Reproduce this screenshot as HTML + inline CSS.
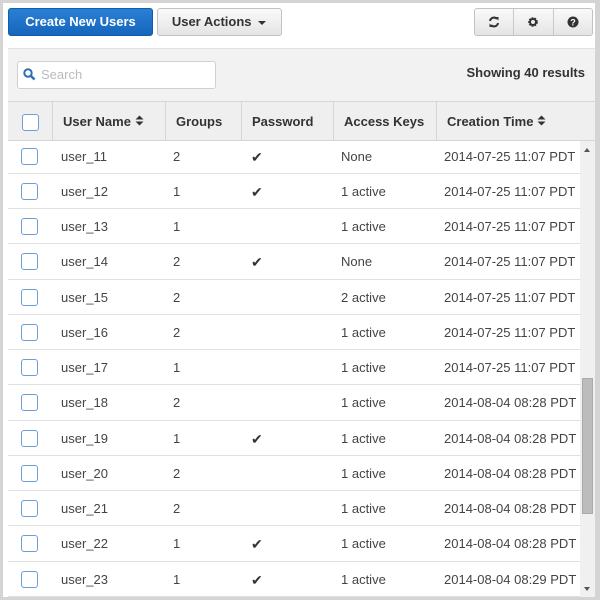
<!DOCTYPE html>
<html><head><style>
*{box-sizing:border-box;margin:0;padding:0}
body{width:600px;height:600px;background:#d4d4d4;font-family:"Liberation Sans",Arial,sans-serif;position:relative;overflow:hidden}
#panel{position:absolute;left:3px;top:3px;width:592px;height:594px;background:#fff;overflow:hidden}
.btn{position:absolute;top:5px;height:28px;border-radius:3px;font-size:13px;font-weight:bold;line-height:26px;text-align:center}
.b1{left:5px;width:145px;background:linear-gradient(#2a7fd4,#1566bd);border:1px solid #135ea8;color:#fff}
.b2{left:154px;width:125px;background:linear-gradient(#fafafa,#e4e4e4);border:1px solid #c2c2c2;color:#333}
.grp{position:absolute;top:5px;left:471px;width:119px;height:28px;border:1px solid #c2c2c2;border-radius:3px;background:linear-gradient(#fafafa,#e4e4e4);display:flex}
.grp div{flex:1;border-left:1px solid #c8c8c8;display:flex;align-items:center;justify-content:center}
.grp div:first-child{border-left:none}
#tool{position:absolute;left:5px;top:45px;width:587px;height:53px;background:#f2f2f2;border-top:1px solid #e2e2e2}
#search{position:absolute;left:9px;top:12px;width:199px;height:28px;background:#fff;border:1px solid #d0d0d0;border-radius:3px;font-size:13px;color:#bbb;line-height:26px;padding-left:23px}
#show{position:absolute;right:10px;top:16px;font-size:13px;font-weight:bold;color:#333}
#head{position:absolute;left:5px;top:98px;width:587px;height:40px;background:#efefef;border-top:1px solid #d6d6d6;border-bottom:1px solid #d6d6d6;font-size:13px;font-weight:bold;color:#333}
.hc{position:absolute;top:0;height:39px;line-height:39px;border-left:1px solid #d6d6d6;padding-left:10px}
.cb{position:absolute;width:17px;height:17px;border:1.5px solid #6d9fd6;border-radius:3px;background:#fff}
#rows{position:absolute;left:5px;top:135.5px;width:572px}
.r{position:relative;height:35.25px;border-bottom:1.5px solid #e0e0e0;font-size:13px;color:#444}
.r span{position:absolute;top:0;line-height:36px}
.r .cb{top:9px}
.ck{font-size:14px;color:#333}
#sb{position:absolute;left:577px;top:138px;width:15px;height:456px;background:#f0f0f0}
#thumb{position:absolute;left:2px;top:237px;width:11px;height:136px;background:#bcbcbc;border:1px solid #aaa}
</style></head><body><div id="panel">
<div class="btn b1">Create New Users</div>
<div class="btn b2">User Actions <svg width="9" height="6" viewBox="0 0 9 6" style="margin-left:3px"><path d="M0 1h8L4 5z" fill="#333"/></svg></div>
<div class="grp">
<div><svg width="12" height="12" viewBox="0 0 12 12"><path d="M2 5a4 4 0 0 1 7-2M10 7a4 4 0 0 1-7 2" stroke="#333" stroke-width="2" fill="none"/><path d="M7 1h3.5v3.5zM5 11H1.5V7.5z" fill="#333"/></svg></div>
<div><svg width="12" height="12" viewBox="0 0 12 12"><circle cx="6" cy="6" r="3.6" fill="none" stroke="#333" stroke-width="2.4" stroke-dasharray="1.6 1"/><circle cx="6" cy="6" r="3" fill="none" stroke="#333" stroke-width="2"/></svg></div>
<div><svg width="12" height="12" viewBox="0 0 12 12"><circle cx="6" cy="6" r="5.5" fill="#333"/><text x="6" y="9.5" font-size="9" font-weight="bold" text-anchor="middle" fill="#fff" font-family="Liberation Sans">?</text></svg></div>
</div>
<div id="tool"><div id="search">Search</div>
<svg style="position:absolute;left:15px;top:19px" width="13" height="13" viewBox="0 0 13 13"><circle cx="5" cy="5" r="3.7" fill="none" stroke="#2f6fb5" stroke-width="2"/><path d="M8 8l3.5 3.5" stroke="#2f6fb5" stroke-width="2.5"/></svg>
<div id="show">Showing 40 results</div></div>
<div id="head">
<div class="cb" style="left:14px;top:12px"></div>
<div class="hc" style="left:44px;width:113px">User Name <svg width="9" height="11" viewBox="0 0 9 11"><path d="M0.5 4.5L4.5 0.5 8.5 4.5zM0.5 6.5L4.5 10.5 8.5 6.5z" fill="#333"/></svg></div>
<div class="hc" style="left:157px;width:76px">Groups</div>
<div class="hc" style="left:233px;width:92px">Password</div>
<div class="hc" style="left:325px;width:103px">Access Keys</div>
<div class="hc" style="left:428px;width:159px">Creation Time <svg width="9" height="11" viewBox="0 0 9 11"><path d="M0.5 4.5L4.5 0.5 8.5 4.5zM0.5 6.5L4.5 10.5 8.5 6.5z" fill="#333"/></svg></div>
</div>
<div id="rows">
<div class="r"><div class="cb" style="left:13px"></div><span style="left:53px">user_11</span><span style="left:165px">2</span><span class="ck" style="left:243px">&#10004;</span><span style="left:333px">None</span><span style="left:436px">2014-07-25 11:07 PDT</span></div>
<div class="r"><div class="cb" style="left:13px"></div><span style="left:53px">user_12</span><span style="left:165px">1</span><span class="ck" style="left:243px">&#10004;</span><span style="left:333px">1 active</span><span style="left:436px">2014-07-25 11:07 PDT</span></div>
<div class="r"><div class="cb" style="left:13px"></div><span style="left:53px">user_13</span><span style="left:165px">1</span><span style="left:333px">1 active</span><span style="left:436px">2014-07-25 11:07 PDT</span></div>
<div class="r"><div class="cb" style="left:13px"></div><span style="left:53px">user_14</span><span style="left:165px">2</span><span class="ck" style="left:243px">&#10004;</span><span style="left:333px">None</span><span style="left:436px">2014-07-25 11:07 PDT</span></div>
<div class="r"><div class="cb" style="left:13px"></div><span style="left:53px">user_15</span><span style="left:165px">2</span><span style="left:333px">2 active</span><span style="left:436px">2014-07-25 11:07 PDT</span></div>
<div class="r"><div class="cb" style="left:13px"></div><span style="left:53px">user_16</span><span style="left:165px">2</span><span style="left:333px">1 active</span><span style="left:436px">2014-07-25 11:07 PDT</span></div>
<div class="r"><div class="cb" style="left:13px"></div><span style="left:53px">user_17</span><span style="left:165px">1</span><span style="left:333px">1 active</span><span style="left:436px">2014-07-25 11:07 PDT</span></div>
<div class="r"><div class="cb" style="left:13px"></div><span style="left:53px">user_18</span><span style="left:165px">2</span><span style="left:333px">1 active</span><span style="left:436px">2014-08-04 08:28 PDT</span></div>
<div class="r"><div class="cb" style="left:13px"></div><span style="left:53px">user_19</span><span style="left:165px">1</span><span class="ck" style="left:243px">&#10004;</span><span style="left:333px">1 active</span><span style="left:436px">2014-08-04 08:28 PDT</span></div>
<div class="r"><div class="cb" style="left:13px"></div><span style="left:53px">user_20</span><span style="left:165px">2</span><span style="left:333px">1 active</span><span style="left:436px">2014-08-04 08:28 PDT</span></div>
<div class="r"><div class="cb" style="left:13px"></div><span style="left:53px">user_21</span><span style="left:165px">2</span><span style="left:333px">1 active</span><span style="left:436px">2014-08-04 08:28 PDT</span></div>
<div class="r"><div class="cb" style="left:13px"></div><span style="left:53px">user_22</span><span style="left:165px">1</span><span class="ck" style="left:243px">&#10004;</span><span style="left:333px">1 active</span><span style="left:436px">2014-08-04 08:28 PDT</span></div>
<div class="r"><div class="cb" style="left:13px"></div><span style="left:53px">user_23</span><span style="left:165px">1</span><span class="ck" style="left:243px">&#10004;</span><span style="left:333px">1 active</span><span style="left:436px">2014-08-04 08:29 PDT</span></div>
</div>
<div id="sb"><div style="position:absolute;left:4px;top:7px;border:3.5px solid transparent;border-bottom:4px solid #555;border-top:none"></div><div id="thumb"></div><div style="position:absolute;left:4px;bottom:6px;border:3.5px solid transparent;border-top:4px solid #555;border-bottom:none"></div></div>
</div></body></html>
